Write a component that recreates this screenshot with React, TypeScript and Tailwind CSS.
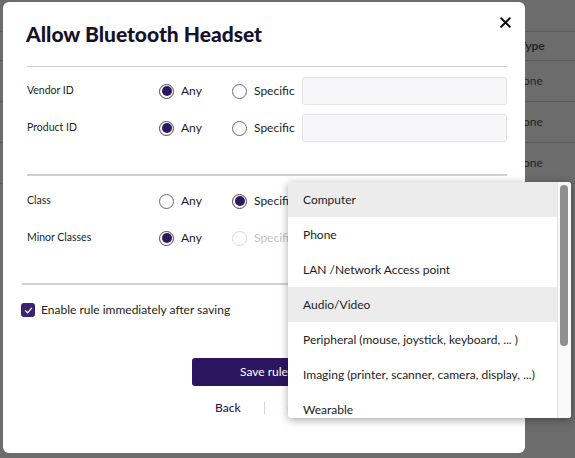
import React from 'react';

const font = { fontFamily: 'Lato, "Noto Sans", sans-serif' };

function Radio({ checked, disabled }: { checked?: boolean; disabled?: boolean }) {
  return (
    <span
      className={`flex h-[15px] w-[15px] shrink-0 items-center justify-center rounded-full border bg-white ${
        disabled ? 'border-[#d9d9d9]' : checked ? 'border-[#4a4a4a]' : 'border-[#6b6b6b]'
      }`}
    >
      {checked && <span className="h-[10px] w-[10px] rounded-full bg-[#2c1762]" />}
    </span>
  );
}

function Option({ label, checked, disabled, width }: { label: string; checked?: boolean; disabled?: boolean; width: string }) {
  return (
    <div className={`flex items-center gap-[7px] ${width}`}>
      <Radio checked={checked} disabled={disabled} />
      <span className={`text-[12px] ${disabled ? 'text-[#c4c4c4]' : 'text-[#1c1c1c]'}`}>{label}</span>
    </div>
  );
}

function FieldRow({ label, any, input }: { label: string; any: boolean; input?: boolean }) {
  return (
    <div className="flex h-[28px] items-center">
      <span className="w-[132px] text-[10.5px] text-[#1c1c1c]">{label}</span>
      <Option label="Any" checked={any} width="w-[73px]" />
      <Option label="Specific" checked={!any} width="w-[70px]" />
      {input && <div className="h-[28px] flex-1 rounded-[3px] border border-[#e3e3e8] bg-[#f7f7f9]" />}
    </div>
  );
}

const classes = [
  'Computer',
  'Phone',
  'LAN /Network Access point',
  'Audio/Video',
  'Peripheral (mouse, joystick, keyboard, ... )',
  'Imaging (printer, scanner, camera, display, ...)',
  'Wearable',
];

export default function App() {
  return (
    <div className="relative h-[458px] w-[575px] overflow-hidden bg-[#6c6c6c]" style={font}>
      {/* dimmed page behind the dialog */}
      <div className="flex flex-col pt-[31px] text-[12px] text-[#262626]">
        <div className="flex h-[29px] items-center border-t border-[#5b5b5b] pl-[519px] font-bold">Type</div>
        {['None', 'None', 'None', 'None'].map((t, i) => (
          <div key={i} className="flex h-[41px] items-center border-t border-[#5b5b5b] pl-[514px]">
            {t}
          </div>
        ))}
      </div>

      {/* dialog */}
      <div className="absolute left-[3px] top-[2px] flex h-[451px] w-[522px] flex-col rounded-[6px] bg-white pl-[24px] pr-[18px]">
        <div className="flex items-start justify-between pt-[14px]">
          <h1
            className="mt-[5px] -ml-[1px] text-[21px] font-black leading-[26px] text-[#14112b]"
            style={{ fontFamily: '"Lato Black", Lato, sans-serif' }}
          >
            Allow Bluetooth Headset
          </h1>
          <svg width="11" height="11" viewBox="0 0 11 11" className="mt-[1px] -mr-[4px]">
            <path d="M1.2 1.2 L9.8 9.8 M9.8 1.2 L1.2 9.8" stroke="#111" strokeWidth="2" strokeLinecap="round" />
          </svg>
        </div>

        <div className="mt-[19px] h-px bg-[#cbcbcf]" />

        <div className="mt-[10px] flex flex-col gap-[9px]">
          <FieldRow label="Vendor ID" any input />
          <FieldRow label="Product ID" any input />
        </div>

        <div className="mt-[32px] h-[2px] bg-[#d0d0da]" />

        <div className="mt-[11px] flex flex-col gap-[9px]">
          <div className="flex h-[28px] items-center">
            <span className="w-[132px] text-[10.5px] text-[#1c1c1c]">Class</span>
            <Option label="Any" width="w-[73px]" />
            <Option label="Specific" checked width="w-[70px]" />
          </div>
          <div className="flex h-[28px] items-center">
            <span className="w-[132px] text-[10.5px] text-[#1c1c1c]">Minor Classes</span>
            <Option label="Any" checked width="w-[73px]" />
            <Option label="Specific" disabled width="w-[70px]" />
          </div>
        </div>

        <div className="mt-[31px] -ml-[5px] h-[2px] bg-[#d0d0da]" />

        <div className="mt-[15px] -ml-[6px] flex h-[20px] items-center gap-[6px]">
          <span className="flex h-[14px] w-[14px] items-center justify-center rounded-[3px] bg-[#3a236f]">
            <svg width="9" height="9" viewBox="0 0 9 9">
              <path d="M1.5 4.8 L3.6 6.8 L7.6 2.2" fill="none" stroke="#fff" strokeWidth="1.2" strokeLinecap="round" strokeLinejoin="round" />
            </svg>
          </span>
          <span className="text-[12px] text-[#1c1c1c]">Enable rule immediately after saving</span>
        </div>

        <button className="mt-[38px] ml-[165px] h-[28px] w-[144px] rounded-[3px] bg-[#2c1660] text-[12px] text-white">Save rule</button>

        <div className="mt-[12px] ml-[188px] flex h-[20px] items-center gap-[23px] text-[12px] font-medium text-[#2c1660]">
          <span>Back</span>
          <span className="h-[12px] w-px bg-[#d4d4d4]" />
          <span>Cancel</span>
        </div>
      </div>

      {/* class dropdown */}
      <div className="absolute left-[288px] top-[182px] flex h-[236px] w-[283px] overflow-hidden rounded-[3px] bg-white shadow-[0_2px_8px_rgba(0,0,0,0.35)]">
        <ul className="flex-1">
          {classes.map((c) => (
            <li
              key={c}
              className={`flex h-[35px] items-center pl-[15px] text-[12px] text-[#1c1c1c] ${
                c === 'Computer' || c === 'Audio/Video' ? 'bg-[#ececec]' : ''
              }`}
            >
              {c}
            </li>
          ))}
        </ul>
        <div className="w-[14px] border-l border-[#e6e6e6] bg-[#f9f9f9] pl-[2px] pt-[3px]">
          <div className="h-[161px] w-[8px] rounded-full bg-[#8f8f8f]" />
        </div>
      </div>
    </div>
  );
}
